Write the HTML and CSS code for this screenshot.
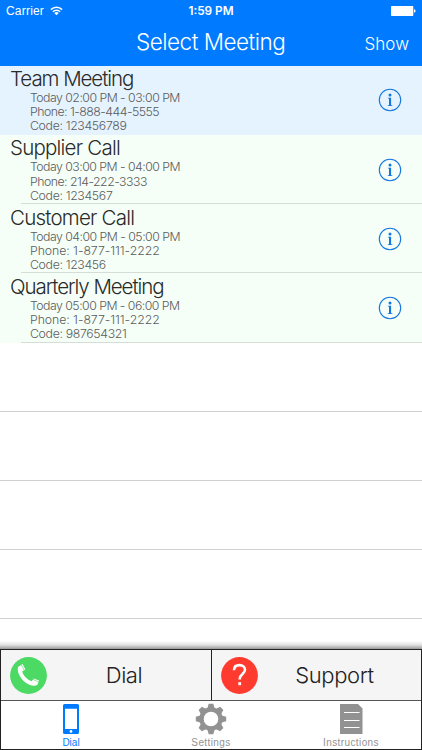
FILE: index.html
```html
<!DOCTYPE html>
<html lang="en">

<head>
    <meta charset="utf-8">
    <title>Select Meeting</title>
    <link rel="stylesheet" href="styles.css">
</head>

<body>
    <svg class="defs" width="0" height="0">
        <symbol id="info" viewBox="0 0 24 24">
            <circle cx="12" cy="12" r="10.7" fill="none" stroke="currentColor" stroke-width="1.1"/>
            <circle cx="12" cy="6.9" r="1.5" fill="currentColor"/>
            <path d="M9.9 9.8H13.1V17.2H14.3V18H9.8V17.2H11V10.6H9.9Z" fill="currentColor"/>
        </symbol>
    </svg>

    <header>
        <div class="status">
            <div class="carrier">
                <span>Carrier</span>
                <svg width="13" height="10" viewBox="0 0 13 10">
                    <path d="M0.9 3.6A8 8 0 0 1 12.1 3.6M2.9 5.7A5.1 5.1 0 0 1 10.1 5.7" fill="none" stroke="#fff" stroke-width="1.5"/>
                    <path d="M6.5 9.2L4.3 7A3.1 3.1 0 0 1 8.7 7Z" fill="#fff"/>
                </svg>
            </div>
            <div class="time">1:59 PM</div>
            <div class="battery">
                <svg width="25" height="10" viewBox="0 0 25 10">
                    <rect width="22.3" height="10" rx="0.8" fill="#fff"/>
                    <path d="M23 3.3Q24.6 3.6 24.6 5T23 6.7Z" fill="#fff"/>
                </svg>
            </div>
        </div>
        <div class="nav">
            <div class="title">Select Meeting</div>
            <div class="show">Show</div>
        </div>
    </header>

    <main>
        <div class="meeting selected">
            <div class="text">
                <h2 class="tight">Team Meeting</h2>
                <p>Today 02:00 PM - 03:00 PM</p>
                <p>Phone: 1-888-444-5555</p>
                <p class="code">Code: 123456789</p>
            </div>
            <svg class="info"><use href="#info"/></svg>
        </div>
        <div class="meeting">
            <div class="text">
                <h2>Supplier Call</h2>
                <p>Today 03:00 PM - 04:00 PM</p>
                <p>Phone: 214-222-3333</p>
                <p class="code">Code: 1234567</p>
            </div>
            <svg class="info"><use href="#info"/></svg>
        </div>
        <div class="meeting">
            <div class="text">
                <h2>Customer Call</h2>
                <p>Today 04:00 PM - 05:00 PM</p>
                <p class="ones">Phone: 1-877-111-2222</p>
                <p class="code">Code: 123456</p>
            </div>
            <svg class="info"><use href="#info"/></svg>
        </div>
        <div class="meeting">
            <div class="text">
                <h2 class="tight">Quarterly Meeting</h2>
                <p>Today 05:00 PM - 06:00 PM</p>
                <p class="ones">Phone: 1-877-111-2222</p>
                <p class="code">Code: 987654321</p>
            </div>
            <svg class="info"><use href="#info"/></svg>
        </div>
        <div class="empty"></div>
        <div class="empty"></div>
        <div class="empty"></div>
        <div class="empty"></div>
        <div class="shade"></div>
    </main>

    <footer>
        <div class="actions">
            <div class="action">
                <svg width="37" height="37" viewBox="0 0 37 37">
                    <circle cx="18.5" cy="18.5" r="18.4" fill="#4cd964"/>
                    <path d="M8 10L12.6 7L15.4 12.4L12.2 14.6C13 18.4 17.4 23 21.6 24.2L23.8 21.4L29 23.4L27.4 27.8C24.6 30 19 28.6 14.8 25C10.2 21 6.8 15 8 10Z" fill="#fff"/>
                    <path d="M11.1 7.4L14.4 13.6M22.8 22.3L28.4 24.9" stroke="#4cd964" stroke-width="0.6"/>
                </svg>
                <span>Dial</span>
            </div>
            <div class="action">
                <svg width="37" height="37" viewBox="0 0 37 37">
                    <circle cx="18.5" cy="18.5" r="18.4" fill="#ff3b30"/>
                    <path d="M13 13.2C13 9.8 15.2 8.1 18.5 8.1C21.8 8.1 24 10 24 12.8C24 16.7 18.7 17.3 18.7 21.8V22.6" fill="none" stroke="#fff" stroke-width="2.6"/>
                    <rect x="17.3" y="25.2" width="2.8" height="3" fill="#fff"/>
                </svg>
                <span>Support</span>
            </div>
        </div>
        <div class="tabs">
            <div class="tab active">
                <svg width="32" height="32" viewBox="0 0 32 32">
                    <path fill-rule="evenodd" d="M9.5 1H22.5Q24 1 24 2.5V29.5Q24 31 22.5 31H9.5Q8 31 8 29.5V2.5Q8 1 9.5 1ZM10 5.7V26H22V5.7ZM16 27A1.4 1.4 0 1 0 16 29.8A1.4 1.4 0 1 0 16 27Z" fill="currentColor"/>
                </svg>
                <span>Dial</span>
            </div>
            <div class="tab">
                <svg width="32" height="32" viewBox="-16 -16 32 32">
                    <circle r="9.5" fill="none" stroke="currentColor" stroke-width="4.4"/>
                    <g fill="currentColor">
                        <path id="tooth" d="M-3.6 -10.8L-2.3 -15.2H2.3L3.6 -10.8Z"/>
                        <use href="#tooth" transform="rotate(45)"/>
                        <use href="#tooth" transform="rotate(90)"/>
                        <use href="#tooth" transform="rotate(135)"/>
                        <use href="#tooth" transform="rotate(180)"/>
                        <use href="#tooth" transform="rotate(225)"/>
                        <use href="#tooth" transform="rotate(270)"/>
                        <use href="#tooth" transform="rotate(315)"/>
                    </g>
                </svg>
                <span>Settings</span>
            </div>
            <div class="tab">
                <svg width="32" height="32" viewBox="0 0 32 32">
                    <path d="M5 1H23L27.5 5.5V31H5Z" fill="currentColor"/>
                    <path d="M9 9.5H24.5M9 17.5H24.5M9 24.5H24.5" stroke="#fff" stroke-width="1.2"/>
                </svg>
                <span>Instructions</span>
            </div>
        </div>
    </footer>
</body>

</html>
```
FILE: styles.css
```css
body {
    margin: 0;
    width: 422px;
    height: 750px;
    overflow: hidden;
    display: flex;
    flex-direction: column;
    background-color: #fff;
    font-family: Inter, "Liberation Sans", sans-serif;
    font-weight: 300;
}

.defs {
    position: absolute;
}

header {
    height: 65.5px;
    flex: none;
    background-color: #007aff;
    color: #fff;
}

.status {
    height: 22px;
    display: grid;
    grid-template-columns: 1fr 1fr 1fr;
    align-items: center;
    padding: 0 6px;
    font-family: "Liberation Sans", sans-serif;
    font-size: 12px;
    font-weight: 400;
}

.carrier {
    display: flex;
    align-items: center;
    gap: 6px;
    letter-spacing: 0.2px;
}

.time {
    text-align: center;
    font-family: Inter, sans-serif;
    font-size: 11.8px;
    font-weight: 600;
}

.battery {
    display: flex;
    justify-content: flex-end;
}

.nav {
    height: 40px;
    display: grid;
    grid-template-columns: 1fr 150px 1fr;
    align-items: center;
    white-space: nowrap;
}

.title {
    grid-column: 2;
    margin-top: -1px;
    font-size: 22.5px;
    letter-spacing: -0.5px;
}

.show {
    justify-self: end;
    padding: 3px 13px 0 0;
    font-size: 17px;
}

main {
    height: 583.5px;
    flex: none;
    position: relative;
    overflow: hidden;
}

.meeting {
    height: 69.2px;
    box-sizing: border-box;
    display: flex;
    align-items: center;
    justify-content: space-between;
    padding: 0 20px 0 10px;
    background: linear-gradient(#d5ddd7, #d5ddd7) 21px 100% / 100% 1px no-repeat #f5fff8;
}

.meeting.selected {
    height: 69.6px;
    background: #e5f3ff;
}

.meeting h2 {
    margin: 0;
    font-size: 20.5px;
    font-weight: 300;
    line-height: 24px;
    letter-spacing: -0.78px;
    color: #2a2a2a;
}

.meeting h2.tight {
    letter-spacing: -1.06px;
}

.meeting p {
    margin: 0 0 0 20px;
    font-size: 12.3px;
    line-height: 14.2px;
    letter-spacing: -0.52px;
    color: #5c5c5c;
}

.meeting p.code {
    letter-spacing: -0.34px;
}

.meeting p.ones {
    letter-spacing: -0.06px;
}

.info {
    width: 24px;
    height: 24px;
    color: #1676e0;
}

.empty {
    height: 69.2px;
    box-sizing: border-box;
    border-bottom: 1px solid #d0d0d3;
}

/* shadow above the button bar */
.shade {
    position: absolute;
    left: 0;
    right: 0;
    bottom: 0;
    height: 8px;
    background: linear-gradient(rgba(0, 0, 0, 0), rgba(0, 0, 0, 0.12) 50%, rgba(0, 0, 0, 0.4));
}

footer {
    height: 101px;
    box-sizing: border-box;
    border: 1px solid #222;
}

.actions {
    height: 50px;
    display: grid;
    grid-template-columns: 1fr 1fr;
    background-color: #f5f5f5;
    border-bottom: 1px solid #555;
}

.action {
    display: flex;
    align-items: center;
    padding-left: 9px;
}

.action + .action {
    padding-left: 9px;
    border-left: 1px solid #222;
}

.action span {
    flex: 1;
    text-align: center;
    padding-right: 10px;
    font-size: 22px;
    letter-spacing: -0.4px;
    color: #222;
}

.tabs {
    height: 48px;
    display: grid;
    grid-template-columns: 1fr 1fr 1fr;
}

.tab {
    display: flex;
    flex-direction: column;
    align-items: center;
    padding-top: 2px;
    color: #929292;
    font-family: "Liberation Sans", sans-serif;
    font-size: 10px;
    font-weight: 400;
    line-height: 16px;
    letter-spacing: 0.4px;
}

.tab.active {
    color: #007aff;
    letter-spacing: 0;
}
```
